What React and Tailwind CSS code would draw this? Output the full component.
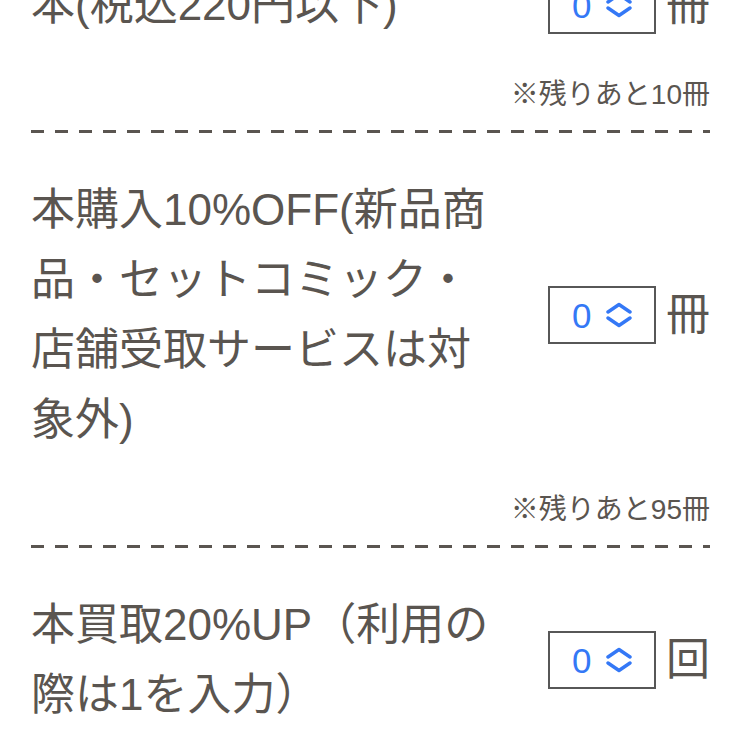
import { Fragment } from "react";

const rows = [
  { lines: ["本(税込220円以下)"], unit: "冊", note: "※残りあと10冊" },
  {
    lines: ["本購入10%OFF(新品商", "品・セットコミック・", "店舗受取サービスは対", "象外)"],
    unit: "冊",
    note: "※残りあと95冊",
  },
  { lines: ["本買取20%UP（利用の", "際は1を入力）"], unit: "回" },
];

const font = { fontFamily: '"Liberation Sans", "Noto Sans CJK JP", sans-serif' };

function Chevrons() {
  return (
    <svg width="26" height="26" viewBox="0 0 26 26" fill="none" stroke="#3478f6" strokeWidth="3.4" strokeLinecap="round" strokeLinejoin="round">
      <path d="M2 10 L13 2.5 L24 10" />
      <path d="M2 16 L13 23.5 L24 16" />
    </svg>
  );
}

function Dashed() {
  return <div className="h-[3px] w-full bg-[repeating-linear-gradient(90deg,#5a5550_0_13px,transparent_13px_24px)]" />;
}

function Row({ row }) {
  return (
    <div className="pt-[42px]">
      <div className="flex items-center justify-between">
        <p className="text-[44px] leading-[70px] whitespace-nowrap">
          {row.lines.map((line, i) => (
            <Fragment key={i}>
              {i > 0 && <br />}
              {line}
            </Fragment>
          ))}
        </p>
        <div className="flex items-center">
          <div className="flex h-[58px] w-[108px] items-center border-2 border-[#575757] pl-[22px]">
            <span className="text-[35px] leading-none text-[#3478f6]">0</span>
            <span className="ml-[15px] flex">
              <Chevrons />
            </span>
          </div>
          <span className="ml-[10px] text-[44px] leading-none">{row.unit}</span>
        </div>
      </div>
      {row.note && (
        <p className="mt-[34px] mb-[14px] text-right text-[28px] leading-[42px]">{row.note}</p>
      )}
    </div>
  );
}

export default function App() {
  return (
    <div className="h-[740px] w-[740px] overflow-hidden bg-white">
      <div className="-mt-[72px] pl-[31px] pr-[30px] text-[#5a5550]" style={font}>
        {rows.map((row, i) => (
          <Fragment key={i}>
            {i > 0 && <Dashed />}
            <Row row={row} />
          </Fragment>
        ))}
      </div>
    </div>
  );
}
